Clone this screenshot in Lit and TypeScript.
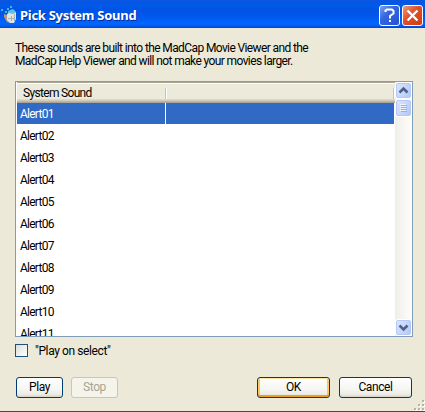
import { LitElement, html, css } from "lit";
import { customElement, property } from "lit/decorators.js";

@customElement("xp-button")
class XpButton extends LitElement {
  @property({ reflect: true }) kind = "normal";
  static styles = css`
    :host { display: block; }
    button {
      display: flex; align-items: center; justify-content: center;
      box-sizing: border-box; width: 100%; height: 21px; padding: 0;
      font: inherit; letter-spacing: inherit; color: #000;
      border: 1px solid #003c74; border-radius: 3px;
      background: linear-gradient(#fff, #f5f5f1 60%, #ecebe5 86%, #d8d2c4);
    }
    :host([kind="default"]) button {
      box-shadow: inset 0 1px #ffe5a8, inset 0 -2px #e9a01b, inset 2px 0 #fbc761, inset -2px 0 #fbc761;
    }
    :host([kind="disabled"]) button { color: #a7a596; border-color: #c9c7ba; background: #f5f4ea; }
  `;
  render() {
    return html`<button ?disabled=${this.kind === "disabled"}><slot></slot></button>`;
  }
}

@customElement("app-root")
class AppRoot extends LitElement {
  static styles = css`
    :host {
      display: flex; flex-direction: column; box-sizing: border-box;
      width: 425px; height: 412px; overflow: hidden; background: #ece9d8;
      border-bottom: 1px solid #0b48d8;
      font: 12px/13px Roboto, "Liberation Sans", sans-serif; letter-spacing: -0.4px; color: #000;
    }
    .title {
      flex: none; height: 28px; box-sizing: border-box; padding: 3px 2px 0 1px;
      display: flex; align-items: center; color: #fff;
      background: linear-gradient(#0b55e0 0, #0059ea 20%, #0054e3 35%, #0058ee 60%, #0066ff 85%, #005bf0 93%, #0045c8);
    }
    .logo { width: 16px; height: 18px; flex: none; margin-bottom: 1px; }
    .caption {
      flex: 1; padding: 0 0 2px 3px; font: bold 13px/18px "Noto Sans", sans-serif;
      letter-spacing: -0.28px; text-shadow: 1px 1px #0a2b91; white-space: nowrap;
    }
    .sys {
      width: 21px; height: 21px; box-sizing: border-box; border: 1px solid #fff; border-radius: 3px;
      margin-left: 2px; background: linear-gradient(135deg, #7ea0f0, #3566e0 40%, #2453d4);
    }
    .close { background: linear-gradient(135deg, #ec9b83, #df4f28 45%, #cf3c12); }
    .sys svg { display: block; }
    .intro { margin: 14px 0 0 15px; white-space: nowrap; height: 26px; letter-spacing: -0.61px; }
    .list {
      flex: none; margin: 13px 0 0 15px; width: 398px; height: 256px; box-sizing: border-box;
      border: 1px solid #7f9db9; background: #fff; display: flex; overflow: hidden;
    }
    .grid { width: 379px; flex: none; padding-left: 1px; box-sizing: border-box; }
    .head, .row { display: grid; grid-template-columns: 148px 1px 1fr 1px; align-items: center; }
    .head {
      height: 21px; box-sizing: border-box; border-top: 1px solid #aca899; padding-right: 1px;
      background: linear-gradient(#fff 0, #fff 1px, #ebeadb 1px, #ebeadb 16px, #e2decd 16px, #d6d2c2 17px, #cbc7b8 18px, #aca899 19px);
    }
    .head span { padding-left: 6px; letter-spacing: -0.68px; }
    .head i { height: 11px; background: #c7c5b2; box-shadow: 1px 0 #fff; }
    .head i:last-child { grid-column: 4; }
    .row { height: 22px; margin-right: 1px; }
    .row span { padding-left: 3px; letter-spacing: -0.75px; }
    .row i { height: 22px; background: #fff; }
    .sel { background: #316ac5; color: #fff; height: 21px; margin-bottom: 1px; }
    .track {
      width: 17px; flex: none; display: flex; flex-direction: column; align-items: center;
      background: linear-gradient(90deg, #f0eee9, #fefefb);
    }
    .arrow, .thumb {
      box-sizing: border-box; width: 15px; border: 1px solid #b6c8f6; border-radius: 2px;
      background: linear-gradient(120deg, #dbe5ff, #c3d3fd 60%, #b4c7f5);
      box-shadow: 0 0 0 1px #fff;
    }
    .arrow { height: 15px; margin-top: 1px; }
    .thumb { height: 16px; margin-top: 2px; margin-bottom: auto; }
    .down { margin-bottom: 1px; }
    .arrow svg, .thumb svg { display: block; }
    .check { display: flex; align-items: center; margin: 7px 0 0 15px; gap: 7px; height: 13px; }
    .check span + span { position: relative; top: 1px; }
    .box {
      width: 13px; height: 13px; box-sizing: border-box; border: 1px solid #1c5180;
      background: linear-gradient(135deg, #dcdcd7, #fff);
    }
    .foot { display: flex; margin: 20px 0 0 16px; }
    .small { width: 47px; margin-right: 8px; }
    .big { width: 73px; margin-right: 9px; }
    .first { margin-left: 131px; }
    .grip { position: absolute; left: 413px; top: 399px; }
  `;
  names = Array.from({ length: 11 }, (_, i) => `Alert${String(i + 1).padStart(2, "0")}`);
  render() {
    return html`
      <div class="title">
        <svg class="logo" viewBox="0 0 16 18">
          <path d="M0 3h2v2H0zM4 5h2v2H4zM6 2h2v2H6zM9 0h2v2H9z" fill="#43b4dc"/>
          <path d="M3 8l3 1 1 5 3 3-4-1-3-5z" fill="#b99a74"/>
          <path d="M7 5l5-2 3 3-3 3-5-1z" fill="#62bfdc"/>
          <path d="M6 8l2-1 4 1 3-2v7l-2 4H9l-3-3z" fill="#dfe3e2"/>
          <path d="M10 10h1v5h-1zM7 12h7v1H7zM13 8h1v7h-1z" fill="#a3b0b4"/>
        </svg>
        <div class="caption">Pick System Sound</div>
        <div class="sys"><svg width="19" height="19" viewBox="0 0 19 19"><path d="M5.5 6V4.500L7 3.500h5l1.500 1.500v2.500L10 10v2.500" fill="none" stroke="#fff" stroke-width="2"/><path d="M9 14h2v2H9z" fill="#fff"/></svg></div>
        <div class="sys close"><svg width="19" height="19" viewBox="0 0 19 19"><path d="M4.500 4.500l10 10M14.500 4.500l-10 10" stroke="#fff" stroke-width="2.3"/></svg></div>
      </div>
      <div class="intro">These sounds are built into the MadCap Movie Viewer and the<br />MadCap Help Viewer and will not make your movies larger.</div>
      <div class="list">
        <div class="grid">
          <div class="head"><span>System Sound</span><i></i><i></i></div>
          ${this.names.map((n, i) => html`<div class="row ${i === 0 ? "sel" : ""}"><span>${n}</span><i></i></div>`)}
        </div>
        <div class="track">
          <div class="arrow"><svg width="13" height="13" viewBox="0 0 13 13"><path d="M2.500 8.500l4-4 4 4" fill="none" stroke="#4d6185" stroke-width="2.6"/></svg></div>
          <div class="thumb"><svg width="13" height="14" viewBox="0 0 13 14"><path d="M3 3.500h6M3 5.500h6M3 7.500h6M3 9.500h6" stroke="#eef4fe"/><path d="M4 4.500h6M4 6.500h6M4 8.500h6M4 10.500h6" stroke="#8cb0f8"/></svg></div>
          <div class="arrow down"><svg width="13" height="13" viewBox="0 0 13 13"><path d="M2.500 4.500l4 4 4-4" fill="none" stroke="#4d6185" stroke-width="2.6"/></svg></div>
        </div>
      </div>
      <div class="check"><span class="box"></span><span>"Play on select"</span></div>
      <div class="foot">
        <xp-button class="small">Play</xp-button>
        <xp-button class="small" kind="disabled">Stop</xp-button>
        <xp-button class="big first" kind="default">OK</xp-button>
        <xp-button class="big">Cancel</xp-button>
      </div>
      <svg class="grip" width="12" height="12" viewBox="0 0 12 12">
        <path d="M10 2h2v2h-2zM6 6h2v2H6zM10 6h2v2h-2zM2 10h2v2H2zM6 10h2v2H6zM10 10h2v2h-2z" fill="#fff"/>
        <path d="M9 1h2v2H9zM5 5h2v2H5zM9 5h2v2H9zM1 9h2v2H1zM5 9h2v2H5zM9 9h2v2H9z" fill="#b8b4a3"/>
      </svg>`;
  }
}
